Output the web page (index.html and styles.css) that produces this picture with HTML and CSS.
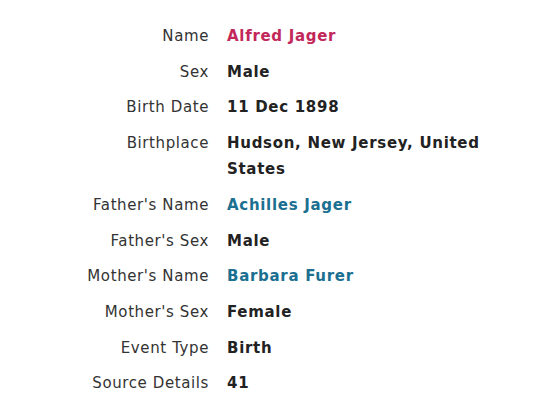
FILE: index.html
```html
<!DOCTYPE html>
<html>
<head>
<meta charset="utf-8">
<link rel="stylesheet" href="styles.css">
</head>
<body>
<dl class="facts">
  <dt>Name</dt><dd class="primary">Alfred Jager</dd>
  <dt>Sex</dt><dd>Male</dd>
  <dt>Birth Date</dt><dd>11 Dec 1898</dd>
  <dt>Birthplace</dt><dd>Hudson, New Jersey, United States</dd>
  <dt>Father's Name</dt><dd class="link">Achilles Jager</dd>
  <dt>Father's Sex</dt><dd>Male</dd>
  <dt>Mother's Name</dt><dd class="link">Barbara Furer</dd>
  <dt>Mother's Sex</dt><dd>Female</dd>
  <dt>Event Type</dt><dd>Birth</dd>
  <dt>Source Details</dt><dd>41</dd>
</dl>
</body>
</html>
```
FILE: styles.css
```css
html, body {
  margin: 0;
  background: #fff;
}
body {
  padding: 23px 8px 0 8px;
  font-family: "DejaVu Sans", Verdana, sans-serif;
  font-size: 15px;
}
.facts {
  display: grid;
  grid-template-columns: 201px 270px;
  column-gap: 18px;
  row-gap: 9.27px;
  margin: 0;
  line-height: 26.4px;
}
.facts dt {
  text-align: right;
  color: #333;
  margin: 0;
  letter-spacing: 0.6px;
}
.facts dd {
  margin: 0;
  font-weight: bold;
  color: #222;
  letter-spacing: 0.7px;
}
.facts dd.primary {
  color: #c2285a;
}
.facts dd.link {
  color: #1b6f90;
}
```
